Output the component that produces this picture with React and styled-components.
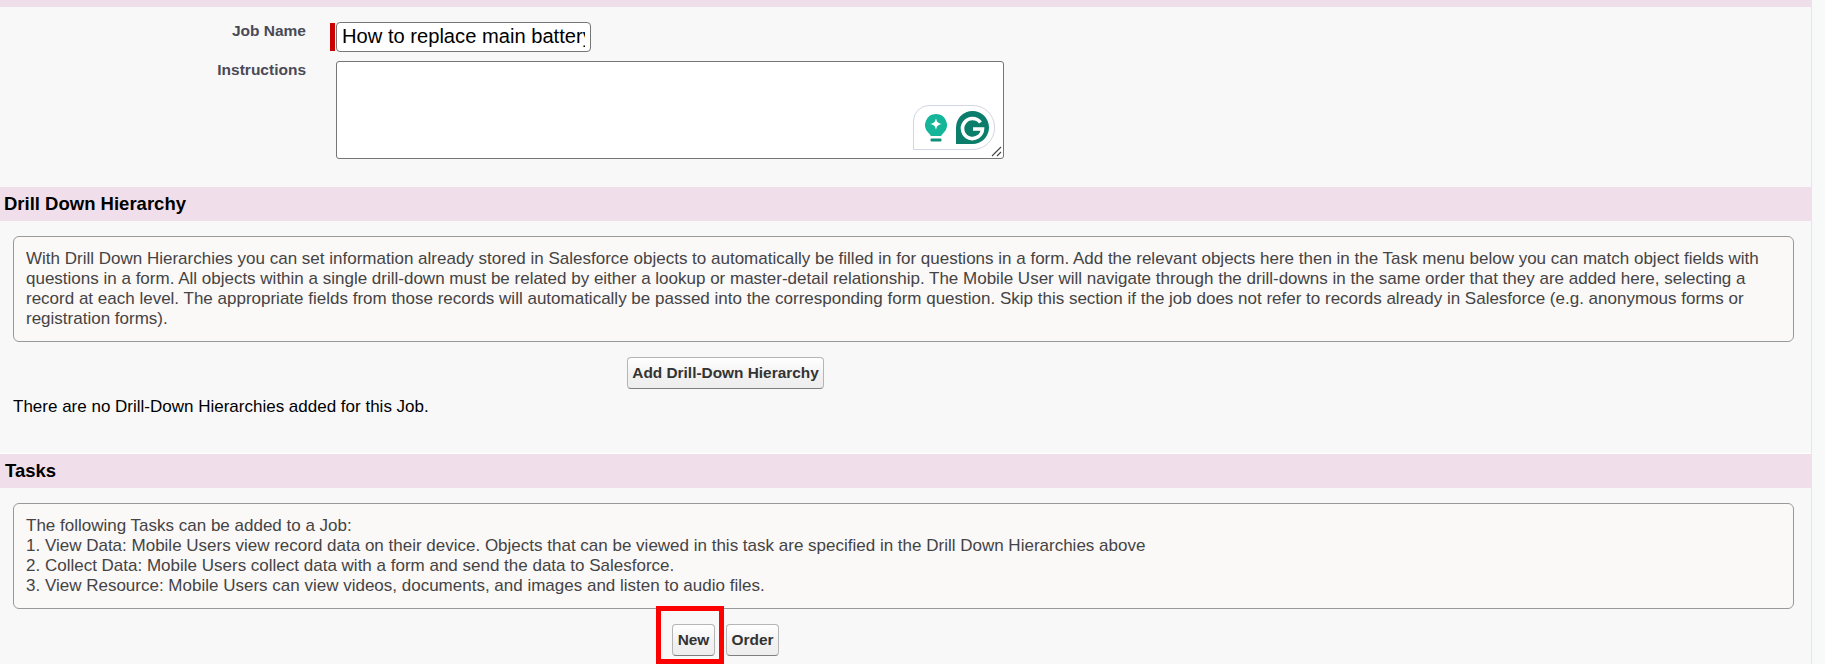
import React from "react";
import styled, { createGlobalStyle } from "styled-components";

const Global = createGlobalStyle`
  html, body { margin: 0; padding: 0; background: #f8f9f9; }
  body { font-family: "Liberation Sans", Arial, sans-serif; overflow: hidden; }
`;
const Page = styled.div`
  width: 1811px; height: 664px; overflow: hidden; background: #f8f8f8;
  border-right: 1px solid #e6e6e6; position: relative;
`;
const TopBand = styled.div`height: 7px; background: #eedfea; margin-bottom: 15px;`;
const FormRow = styled.div`
  display: grid; grid-template-columns: 306px 24px 6px 1fr; align-items: start;
  margin-bottom: ${p => p.$gap}px;
`;
const Label = styled.label`
  font-size: 15.5px; font-weight: 700; color: #4a4a56; text-align: right; line-height: 17px;
`;
const Required = styled.span`
  grid-column: 3; width: 5px; height: 28px; margin-top: 1px; background: #c00;
`;
const NameInput = styled.input`
  grid-column: 4; width: 255px; height: 30px; box-sizing: border-box; font: 20.15px "Liberation Sans", Arial, sans-serif;
  color: #000; padding: 0 5px 2px; border: 1px solid #767676; border-radius: 4px; background: #fff; outline: none;
`;
const AreaWrap = styled.div`
  grid-column: 4; position: relative; width: 668px; height: 98px; box-sizing: border-box;
  border: 1px solid #767676; border-radius: 3px; background: #fff;
`;
const GrammarlyBadge = styled.div`
  position: absolute; left: 576px; top: 43px; width: 82px; height: 45px; box-sizing: border-box;
  border: 1.5px solid #d3d6e4; border-radius: 16px 22px 22px 0; padding-left: 10.5px;
  display: flex; align-items: center; gap: 9px; background: #fff;
`;
const Grip = styled.svg`position: absolute; right: 1px; bottom: 1px;`;
const SectionHeader = styled.h2`
  margin: 0; height: 34px; background: #f0dfea; color: #000; font-size: 18.5px; font-weight: 700;
  line-height: 33px; padding-left: ${p => p.$pad}px;
`;
const InfoBox = styled.div`
  margin: 15px 17px ${p => p.$after}px 13px; padding: 12px 12px 0; height: ${p => p.$h}px; box-sizing: border-box;
  border: 1px solid #999; border-radius: 6px; background: #fbf8f8; color: #444;
  font-size: 17px; line-height: 20px;
`;
const Actions = styled.div`
  display: flex; gap: ${p => p.$gap}px; padding-left: ${p => p.$left}px;
`;
const Button = styled.button`
  height: 32px; width: ${p => p.$w}px; padding: 0; box-sizing: border-box; font: 700 15.4px "Liberation Sans", Arial, sans-serif;
  color: #333; border: 1px solid #b5b5b5; border-bottom-color: #7f7f7f; border-radius: 4px;
  background: linear-gradient(#fff, #f1f1f1 60%, #eee);
`;
const Empty = styled.p`
  margin: 8px 0 0 13px; font-size: 17px; line-height: 20px; color: #000; height: 56px;
`;
const Stack = styled.div`line-height: 20px;`;
const Highlight = styled.div`
  position: absolute; left: 656px; top: 606px; width: 68px; height: 58px; box-sizing: border-box; border: 5px solid #f00;
`;
const Divider = styled.div`height: 1px; background: #fff;`;

export default function App() {
  return (
    <Page>
      <Global />
      <TopBand />
      <FormRow $gap={9}>
        <Label>Job Name</Label>
        <Required />
        <NameInput readOnly value="How to replace main battery" />
      </FormRow>
      <FormRow $gap={28}>
        <Label>Instructions</Label>
        <AreaWrap>
          <GrammarlyBadge>
            <svg width="22" height="28" viewBox="1 1 22 28">
              <path d="M12 1a11 11 0 0 1 7 19.400c-1 .9-1.600 1.700-1.800 2.600H6.800c-.2-.9-.8-1.700-1.800-2.600A11 11 0 0 1 12 1z" fill="#14b598" />
              <path d="M12 5c.8 4.200 1.800 5.200 6 6-4.200.8-5.200 1.800-6 6-.8-4.200-1.800-5.200-6-6 4.200-.8 5.200-1.800 6-6z" fill="#fff" />
              <rect x="6.500" y="25.500" width="11" height="3" rx="1.200" fill="#0d8f78" />
            </svg>
            <svg width="33" height="33" viewBox="0 0 33 33">
              <path d="M16.500 0a16.500 16.500 0 0 1 0 33H0V16.500A16.500 16.500 0 0 1 16.500 0z" fill="#0b7d6b" />
              <path d="M24.500 11.500A10 10 0 1 0 26.500 18H17" fill="none" stroke="#fff" strokeWidth="3.600" />
            </svg>
          </GrammarlyBadge>
          <Grip width="11" height="11" viewBox="0 0 11 11">
            <path d="M1 10 10 1M6 10l4-4" stroke="#444" strokeWidth="1.100" fill="none" />
          </Grip>
        </AreaWrap>
      </FormRow>
      <SectionHeader $pad={4}>Drill Down Hierarchy</SectionHeader>
      <InfoBox $h={106} $after={15}>
        With Drill Down Hierarchies you can set information already stored in Salesforce objects to automatically be filled in for questions in a form. Add the relevant objects here then in the Task menu below you can match object fields with questions in a form. All objects within a single drill-down must be related by either a lookup or master-detail relationship. The Mobile User will navigate through the drill-downs in the same order that they are added here, selecting a record at each level. The appropriate fields from those records will automatically be passed into the corresponding form question. Skip this section if the job does not refer to records already in Salesforce (e.g. anonymous forms or registration forms).
      </InfoBox>
      <Actions $left={627} $gap={0}>
        <Button $w={197}>Add Drill-Down Hierarchy</Button>
      </Actions>
      <Empty>There are no Drill-Down Hierarchies added for this Job.</Empty>
      <Divider />
      <SectionHeader $pad={5}>Tasks</SectionHeader>
      <InfoBox $h={106} $after={15}>
        <Stack>The following Tasks can be added to a Job:</Stack>
        <Stack>1. View Data: Mobile Users view record data on their device. Objects that can be viewed in this task are specified in the Drill Down Hierarchies above</Stack>
        <Stack>2. Collect Data: Mobile Users collect data with a form and send the data to Salesforce.</Stack>
        <Stack>3. View Resource: Mobile Users can view videos, documents, and images and listen to audio files.</Stack>
      </InfoBox>
      <Actions $left={672} $gap={11}>
        <Button $w={43}>New</Button>
        <Button $w={53}>Order</Button>
      </Actions>
      <Highlight />
    </Page>
  );
}
